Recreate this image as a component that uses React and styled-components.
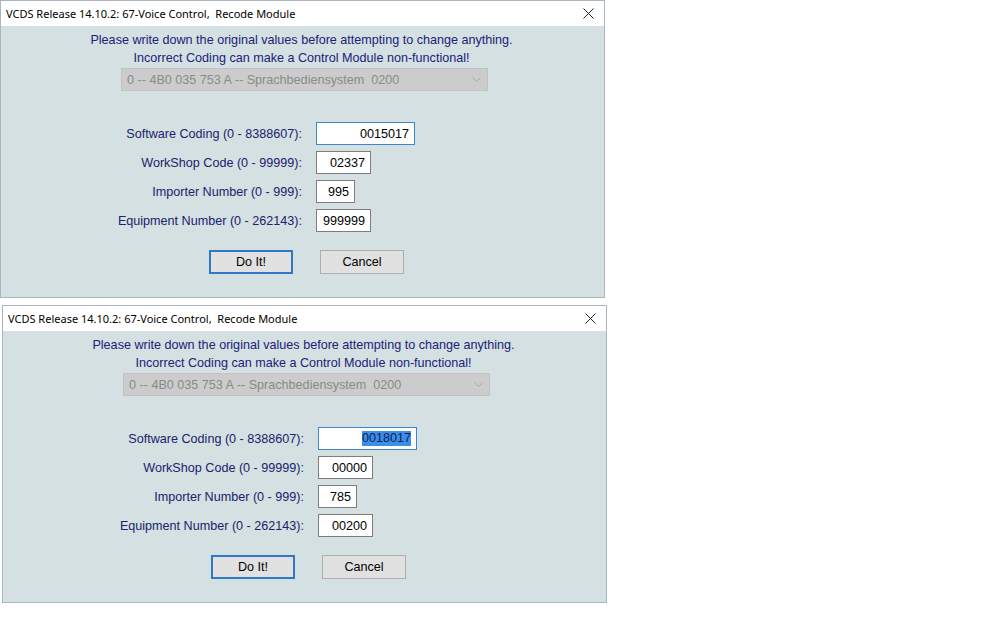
import React from "react";
import styled, { createGlobalStyle } from "styled-components";

const Global = createGlobalStyle`
  html, body { margin: 0; padding: 0; background: #ffffff; }
  body { font-family: "Liberation Sans", Arial, sans-serif; }
`;

const Page = styled.div`
  display: flex;
  flex-direction: column;
  gap: 7px;
  width: 1008px;
  height: 630px;
  box-sizing: border-box;
`;

const Window = styled.div`
  width: 605px;
  height: 298px;
  margin-left: ${(p) => p.$offset || 0}px;
  box-sizing: border-box;
  border: 1px solid #a9b6c1;
  display: flex;
  flex-direction: column;
  background: #d4e0e1;
`;

const TitleBar = styled.div`
  height: 25px;
  flex: none;
  background: #ffffff;
  display: flex;
  align-items: center;
  justify-content: space-between;
  padding: 0 10px 0 5px;
  font-family: "Noto Sans", "Segoe UI", sans-serif;
  font-size: 11px;
  color: #000;
  white-space: pre;
`;

const Close = styled.svg`
  width: 11px;
  height: 11px;
`;

const Body = styled.div`
  flex: 1;
  display: flex;
  flex-direction: column;
  align-items: flex-start;
  padding-top: 5px;
`;

const Notice = styled.div`
  align-self: stretch;
  text-align: center;
  color: #20207a;
  font-size: 12.6px;
  line-height: 18px;
  padding-right: 2px;
`;

const Combo = styled.div`
  margin: 1px 0 0 120px;
  width: 367px;
  height: 23px;
  box-sizing: border-box;
  background: #cccccc;
  border: 1px solid #c2c2c2;
  display: flex;
  align-items: center;
  justify-content: space-between;
  padding: 0 6px 0 5px;
  color: #8a8a8a;
  font-size: 12.6px;
  white-space: pre;
`;

const Fields = styled.div`
  margin-top: 31px;
  display: grid;
  grid-template-columns: 301px auto;
  column-gap: 14px;
  row-gap: 6px;
  align-items: center;
`;

const Label = styled.div`
  text-align: right;
  color: #20206e;
  font-size: 12.6px;
  padding-top: 1px;
`;

const Field = styled.div`
  width: ${(p) => p.$w}px;
  height: 23px;
  box-sizing: border-box;
  background: #ffffff;
  border: 1px solid ${(p) => (p.$focus ? "#3f86c4" : "#7d7d7d")};
  display: flex;
  align-items: center;
  justify-content: flex-end;
  padding-right: 5px;
  font-size: 12.6px;
  color: #000;
`;

const Selected = styled.span`
  background: #3a8fe6;
  color: #10205a;
  line-height: 15px;
`;

const Buttons = styled.div`
  margin: 18px 0 0 208px;
  display: flex;
  gap: 27px;
`;

const Button = styled.div`
  width: 84px;
  height: 24px;
  box-sizing: border-box;
  background: #e1e1e1;
  border: ${(p) => (p.$default ? "2px solid #2d79c7" : "1px solid #adadad")};
  display: flex;
  align-items: center;
  justify-content: center;
  font-size: 12.6px;
  color: #000;
`;

const Chevron = () => (
  <svg width="9" height="5" viewBox="0 0 9 5">
    <path d="M0.5 0.5 L4.5 4.5 L8.5 0.5" fill="none" stroke="#a8a8a8" strokeWidth="1" />
  </svg>
);

const CloseIcon = () => (
  <Close viewBox="0 0 11 11">
    <path d="M0.5 0.5 L10.5 10.5 M10.5 0.5 L0.5 10.5" stroke="#222" strokeWidth="1" />
  </Close>
);

const RecodeDialog = ({ offset, values, selectFirst }) => {
  const rows = [
    { label: "Software Coding (0 - 8388607):", w: 99, focus: true },
    { label: "WorkShop Code (0 - 99999):", w: 55 },
    { label: "Importer Number (0 - 999):", w: 39 },
    { label: "Equipment Number (0 - 262143):", w: 55 },
  ];
  return (
    <Window $offset={offset}>
      <TitleBar>
        <span>VCDS Release 14.10.2: 67-Voice Control,  Recode Module</span>
        <CloseIcon />
      </TitleBar>
      <Body>
        <Notice>
          Please write down the original values before attempting to change anything.
          <br />
          Incorrect Coding can make a Control Module non-functional!
        </Notice>
        <Combo>
          <span>0 -- 4B0 035 753 A -- Sprachbediensystem  0200</span>
          <Chevron />
        </Combo>
        <Fields>
          {rows.map((r, i) => (
            <React.Fragment key={r.label}>
              <Label>{r.label}</Label>
              <Field $w={r.w} $focus={r.focus}>
                {i === 0 && selectFirst ? <Selected>{values[i]}</Selected> : values[i]}
              </Field>
            </React.Fragment>
          ))}
        </Fields>
        <Buttons>
          <Button $default>Do It!</Button>
          <Button>Cancel</Button>
        </Buttons>
      </Body>
    </Window>
  );
};

export default function App() {
  return (
    <>
      <Global />
      <Page>
        <RecodeDialog offset={0} values={["0015017", "02337", "995", "999999"]} />
        <RecodeDialog offset={2} values={["0018017", "00000", "785", "00200"]} selectFirst />
      </Page>
    </>
  );
}
